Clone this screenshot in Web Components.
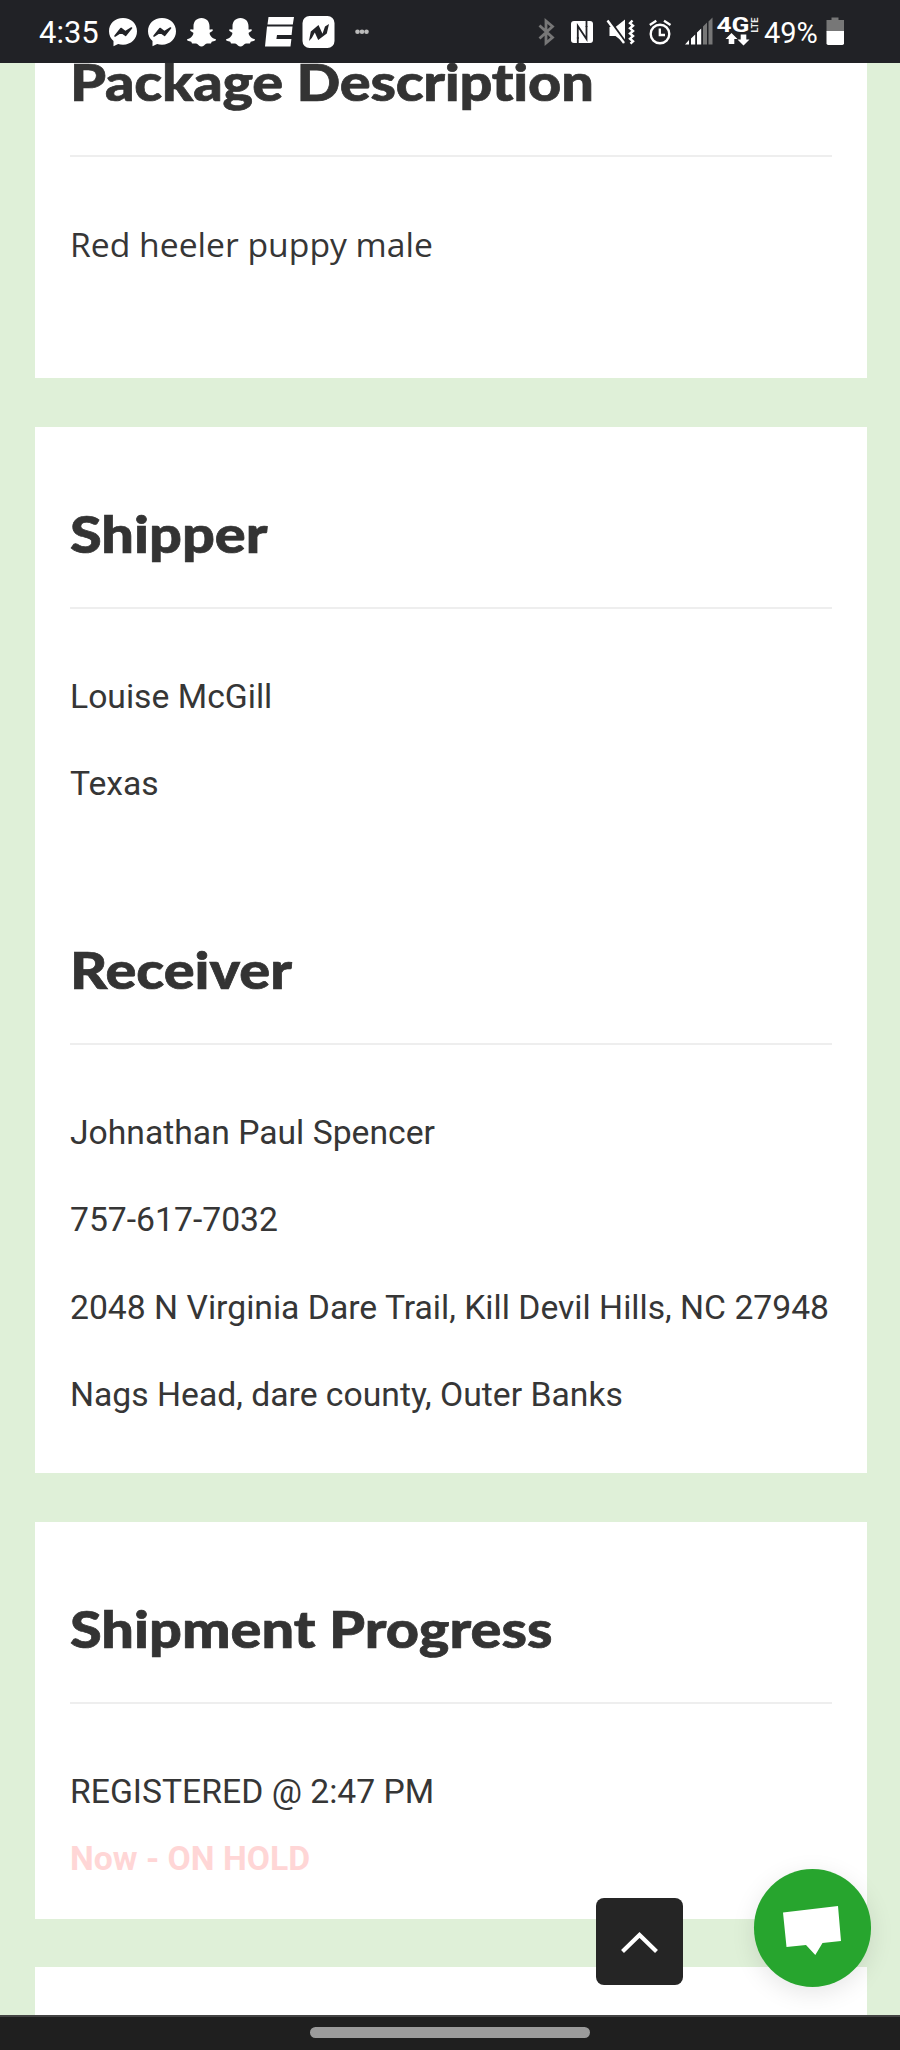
<!DOCTYPE html>
<html lang="en">
<head>
<meta charset="utf-8">
<title>Shipment tracking</title>
<style>
  body {
    margin: 0;
    background: #dff0d8;
    color: #363636;
    font-family: Roboto, sans-serif;
  }

  b {
    color: #ffd6d6;
    font-weight: 700;
  }
</style>
</head>
<body>
<tracking-screen>
  <status-bar slot="top"></status-bar>

  <info-card class="first" style="--pad-bottom: 100px">
    <card-section tracking="-0.2px">
      <span slot="title">Package Description</span>
      <p class="open">Red heeler puppy male</p>
    </card-section>
  </info-card>

  <info-card style="--pad-bottom: 45px">
    <card-section>
      <span slot="title">Shipper</span>
      <p>Louise McGill</p>
      <p>Texas</p>
    </card-section>
    <card-section>
      <span slot="title">Receiver</span>
      <p>Johnathan Paul Spencer</p>
      <p>757-617-7032</p>
      <p>2048 N Virginia Dare Trail, Kill Devil Hills, NC 27948</p>
      <p>Nags Head, dare county, Outer Banks</p>
    </card-section>
  </info-card>

  <info-card style="--pad-bottom: 26px">
    <card-section>
      <span slot="title">Shipment Progress</span>
      <p>REGISTERED @ 2:47 PM<br><b>Now - ON HOLD</b></p>
    </card-section>
  </info-card>

  <info-card></info-card>

  <scroll-top slot="float"></scroll-top>
  <chat-button slot="float"></chat-button>
  <nav-bar slot="bottom"></nav-bar>
</tracking-screen>

<script>
class BaseElement extends HTMLElement {
  constructor() {
    super();
    this.attachShadow({ mode: "open" });
  }

  connectedCallback() {
    const template = document.createElement("template");
    template.innerHTML = this.html();
    this.shadowRoot.appendChild(template.content);
  }
}

class TrackingScreen extends BaseElement {
  html() {
    return `
      <style>
        :host {
          display: flex;
          flex-direction: column;
          position: relative;
          width: 900px;
          height: 2050px;
          overflow: hidden;
        }
        main {
          flex: 1;
          min-height: 0;
          overflow: hidden;
          display: flex;
          flex-direction: column;
          gap: 48.500px;
          padding: 0 33px 0 35px;
        }
        ::slotted(info-card) { flex: none; }
        ::slotted(info-card:last-of-type) { height: 80px; }
      </style>
      <slot name="top"></slot>
      <main><slot></slot></main>
      <slot name="bottom"></slot>
      <slot name="float"></slot>
    `;
  }
}

class InfoCard extends BaseElement {
  html() {
    return `
      <style>
        :host {
          display: flex;
          flex-direction: column;
          gap: 120px;
          box-sizing: border-box;
          padding: 75px 35px var(--pad-bottom, 0);
          background: #fff;
        }
        :host(.first) {
          margin-top: -13px;
          padding-top: 0;
        }
      </style>
      <slot></slot>
    `;
  }
}

class CardSection extends BaseElement {
  html() {
    const tracking = this.getAttribute("tracking") || "0";
    return `
      <style>
        :host { display: block; }
        h2 {
          margin: 0 0 43px;
          color: #333;
          font: 900 52px/62px Lato, sans-serif;
          font-variant-ligatures: none;
          letter-spacing: ${tracking};
          white-space: nowrap;
          -webkit-text-stroke: .7px #333;
          transform: scaleX(1.108);
          transform-origin: left;
        }
        hr {
          margin: 0 0 54px;
          border: 0;
          height: 2px;
          background: #eee;
        }
        ::slotted(p) {
          margin: 0 0 20px;
          font-size: 33.7px;
          line-height: 67.4px;
          white-space: nowrap;
        }
        ::slotted(p:last-of-type) { margin-bottom: 0; }
        ::slotted(p.open) { font-family: "Open Sans", sans-serif; }
      </style>
      <h2><slot name="title"></slot></h2>
      <hr>
      <slot></slot>
    `;
  }
}

const messenger = `
  <path fill="#fff" d="M19 18c-8.200 0-14 5.800-14 13.300 0 4 1.700 7.300 4.500 9.700v5.200l4.600-2.300c1.500.5 3.100.8 4.900.8 8.200 0 14-5.900 14-13.400S27.200 18 19 18z"/>
  <path d="M11 36l6-7.500 4.500 3.300 6-3.800-5.800 7.300-4.600-3.200z" fill="#212226" stroke="#212226" stroke-width="1.600" stroke-linejoin="round"/>`;

const snap = `
  <path fill="#fff" d="M19.500 18c-5 0-8 3.600-8 8.200v3.300c-.8.300-1.900-.4-2.800-.2-.9.400-.6 1.500.2 2l2.400 1.400c.5 2.300-2.400 5.600-6 6.500-.6.300-.3 1 .2 1.300 1.100.8 3 .8 3.800 1.300.5.600.2 1.500 1 1.700 1.200.2 2.900-.4 4.600.3 1.500.8 2.500 2.700 4.600 2.700s3.100-1.900 4.600-2.700c1.700-.7 3.400-.1 4.600-.3.800-.2.500-1.100 1-1.700.8-.5 2.700-.5 3.800-1.300.5-.3.800-1 .2-1.300-3.600-.9-6.500-4.200-6-6.500l2.400-1.400c.8-.5 1.100-1.600.2-2-.9-.2-2 .5-2.800.2v-3.300c0-4.600-3-8.200-8-8.200z"/>`;

// Each cell is as tall as the bar; drawings are in cell coordinates
const icons = {
  messenger: [39, messenger],
  snap: [39, snap],
  espn: [39, `
    <path fill="#fff" d="M8.500 17H34l-1.200 7.500H7.500zM7 26.500h25.500l-.9 8.500H17l-.6 4h15l-.9 7.500H5z"/>`],
  news: [39, `
    <rect x="3.500" y="16" width="32" height="32" rx="7" fill="#fff"/>
    <path fill="#212226" d="M10 41l1.800-9.500L19.500 25l4 8.800 2.500-7.300 4-2.500-2.200 9.500-8.600 6.500-3.400-7.500-3 5.500z"/>`],
  dots: [39, `
    <g fill="#bbb"><circle cx="19.500" cy="31.800" r="2.300"/><circle cx="24" cy="31.800" r="2.300"/><circle cx="28.500" cy="31.800" r="2.300"/></g>`],
  bluetooth: [32, `
    <path d="M9.500 25.500l13 12-6.500 5.500V21l6.500 5.500-13 12" fill="none" stroke="#777" stroke-width="2.800"/>`],
  nfc: [38, `
    <rect x="9" y="21" width="22" height="22" rx="3" fill="#fff"/>
    <path d="M15.800 39V26l8.700 13V26" fill="none" stroke="#212226" stroke-width="1.800"/>
    <path d="M15.800 37v6M24.500 21v6" stroke="#212226" stroke-width="1.800"/>`],
  mute: [42, `
    <path fill="#fff" d="M9.500 27h6l9.500-7.500v24l-9.500-7.500h-6z"/>
    <path d="M9 19.500l17 23.500" stroke="#212226" stroke-width="2.600"/>
    <path d="M7.500 20.500L24 43" stroke="#fff" stroke-width="2.400"/>
    <path d="M32.500 20.500l-2.500 2.600 3 2.600-3 2.600 3 2.600-3 2.600 3 2.600-3 2.600 3 2.600-2.500 2.300" fill="none" stroke="#fff" stroke-width="2.400"/>`],
  alarm: [36, `
    <circle cx="18" cy="34" r="9.300" fill="none" stroke="#fff" stroke-width="2.400"/>
    <path d="M17.800 28.500V35h5.200M7.800 25l6.500-4.300M28.500 25L22 20.700" fill="none" stroke="#fff" stroke-width="2.300"/>`],
  signal: [36, `
    <path fill="#fff" d="M7 44.500l4-4.500v4.500zM13 38.500l4.200-4v10H13zM19 32.500l4.200-4v16H19z"/>
    <path fill="#777" d="M25 26.500l4-4v22h-4zM30.500 21.500l4-4v27h-4z"/>`],
  network: [48, `
    <text x="2.500" y="31.500" font-size="19.500" font-weight="700" textLength="33" lengthAdjust="spacingAndGlyphs" fill="#fff">4G</text>
    <text transform="translate(43.500 32.500) rotate(-90)" font-size="9.500" font-weight="700" textLength="15" lengthAdjust="spacingAndGlyphs" fill="#eee">LTE</text>
    <path fill="#fff" d="M17.500 33l6 6h-3.200v5h-5.600v-5h-3.200zM29.500 45.500l6-6h-3.200v-5h-5.600v5h-3.200z"/>`],
  battery: [30, `
    <path fill="#777" d="M11.500 17.500h7V20H24v11.500H6.500V20h5z"/>
    <path fill="#fff" d="M6.500 31H24v12.300q0 1.700-1.700 1.700H8.200q-1.700 0-1.700-1.700z"/>`],
};

class StatusIcon extends BaseElement {
  html() {
    const [width, shape] = icons[this.getAttribute("name")];
    return `
      <style>
        :host { display: block; flex: none; width: ${width}px; height: 63px; }
        svg { display: block; }
      </style>
      <svg width="${width}" height="63" viewBox="0 0 ${width} 63" font-family="Roboto, sans-serif">${shape}</svg>
    `;
  }
}

class StatusBar extends BaseElement {
  html() {
    const icon = (name) => `<status-icon name="${name}"></status-icon>`;
    return `
      <style>
        :host {
          display: flex;
          justify-content: space-between;
          flex: none;
          position: relative;
          z-index: 1;
          box-sizing: border-box;
          height: 63px;
          padding: 0 50px 0 39px;
          background: #212226;
          color: #fff;
        }
        div { display: flex; height: 63px; }
        span { white-space: nowrap; }
        .time { width: 65px; font: 400 31px/66px Roboto, sans-serif; }
        .level { width: 58px; font: 400 29px/66px Roboto, sans-serif; text-indent: 2px; }
      </style>
      <div>
        <span class="time">4:35</span>
        ${["messenger", "messenger", "snap", "snap", "espn", "news", "dots"].map(icon).join("")}
      </div>
      <div>
        ${["bluetooth", "nfc", "mute", "alarm", "signal", "network"].map(icon).join("")}
        <span class="level">49%</span>
        ${icon("battery")}
      </div>
    `;
  }
}

class ScrollTop extends BaseElement {
  html() {
    return `
      <style>
        :host {
          display: grid;
          place-items: center;
          position: absolute;
          left: 596px;
          top: 1897.5px;
          width: 87px;
          height: 87px;
          border-radius: 8px;
          background: #252525;
        }
      </style>
      <svg width="40" height="26" viewBox="0 0 40 26">
        <path d="M2.500 23.500L19.500 7l17 16.500" fill="none" stroke="#fff" stroke-width="4.200"/>
      </svg>
    `;
  }
}

class ChatButton extends BaseElement {
  html() {
    return `
      <style>
        :host {
          position: absolute;
          left: 753.500px;
          top: 1869px;
          width: 117.500px;
          height: 117.500px;
          border-radius: 50%;
          background: #27a52e;
          box-shadow: 0 6px 24px rgba(0, 0, 0, .1);
        }
        svg { display: block; }
      </style>
      <svg width="118" height="118" viewBox="0 0 118 118">
        <path fill="#fff" d="M29 43.500L84 37l3 35-18.500 2-7.200 12L52 76l-19.500 2z"/>
      </svg>
    `;
  }
}

class NavBar extends BaseElement {
  html() {
    return `
      <style>
        :host {
          display: flex;
          justify-content: center;
          flex: none;
          box-sizing: border-box;
          height: 35px;
          padding-top: 10px;
          border-top: 2px solid #444;
          background: #1f1f1f;
        }
        div {
          width: 280px;
          height: 11px;
          border-radius: 6px;
          background: #9b9b9b;
        }
      </style>
      <div></div>
    `;
  }
}

window.customElements.define("status-icon", StatusIcon);
window.customElements.define("status-bar", StatusBar);
window.customElements.define("card-section", CardSection);
window.customElements.define("info-card", InfoCard);
window.customElements.define("scroll-top", ScrollTop);
window.customElements.define("chat-button", ChatButton);
window.customElements.define("nav-bar", NavBar);
window.customElements.define("tracking-screen", TrackingScreen);
</script>
</body>
</html>
